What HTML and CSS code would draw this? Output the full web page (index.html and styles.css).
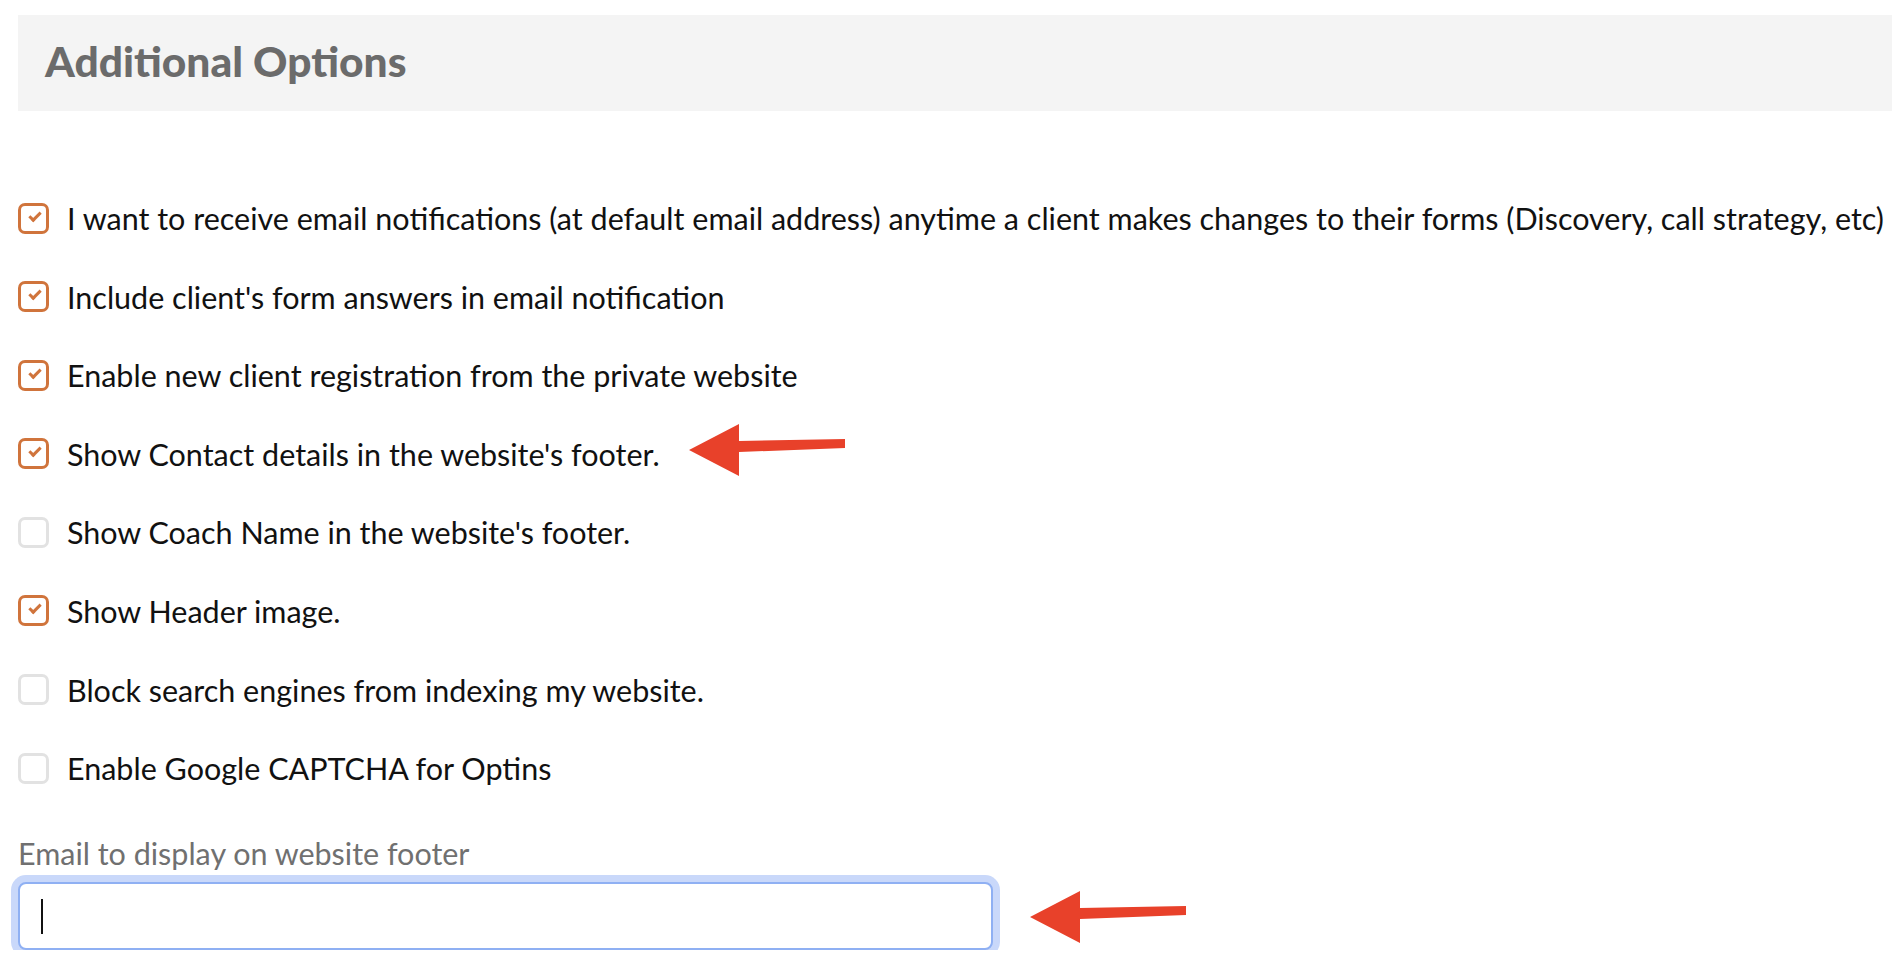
FILE: index.html
```html
<!DOCTYPE html>
<html lang="en">
<head>
  <meta charset="UTF-8">
  <meta name="viewport" content="width=device-width, initial-scale=1.0">
  <title>Additional Options</title>
  <link rel="stylesheet" href="styles.css">
</head>
<body>
  <div class="panel">
    <h2 class="panel-title">Additional Options</h2>
  </div>

  <div class="options">
    <label class="option"><span class="box checked"></span>I want to receive email notifications (at default email address) anytime a client makes changes to their forms (Discovery, call strategy, etc)</label>
    <label class="option"><span class="box checked"></span>Include client's form answers in email notification</label>
    <label class="option"><span class="box checked"></span>Enable new client registration from the private website</label>
    <label class="option"><span class="box checked"></span>Show Contact details in the website's footer.</label>
    <label class="option"><span class="box"></span>Show Coach Name in the website's footer.</label>
    <label class="option"><span class="box checked"></span>Show Header image.</label>
    <label class="option"><span class="box"></span>Block search engines from indexing my website.</label>
    <label class="option"><span class="box"></span>Enable Google CAPTCHA for Optins</label>
  </div>

  <div class="field">
    <label class="field-label" for="footer-email">Email to display on website footer</label>
    <div class="input"><span class="caret"></span></div>
  </div>

  <!-- annotation arrows -->
  <svg class="arrow arrow-one" width="160" height="52" viewBox="0 0 160 52">
    <polygon points="0,26 50,0 50,17 156,15 156,24 50,28 50,52" fill="#e8412a"/>
  </svg>
  <svg class="arrow arrow-two" width="160" height="52" viewBox="0 0 160 52">
    <polygon points="0,26 50,0 50,17 156,15 156,24 50,28 50,52" fill="#e8412a"/>
  </svg>
</body>
</html>
```

FILE: styles.css
```css
body{
  margin: 0;
  padding: 15px 0 0 18px;
  font-family: Lato, "Liberation Sans", sans-serif;
  color: #111;
  background: #fff;
}
.panel{
  background: #f4f4f4;
  height: 96px;
  display: flex;
  align-items: center;
  padding-left: 27px;
}
.panel-title{
  margin: 0 0 6px;
  font-family: Lato, sans-serif;
  font-weight: 900;
  font-size: 42.5px;
  color: #6b6b6b;
}
.options{
  display: flex;
  flex-direction: column;
  gap: 48.6px;
  margin-top: 92px;
}
.option{
  display: flex;
  align-items: center;
  height: 30px;
  font-size: 30.5px;
  white-space: nowrap;
}
.box{
  box-sizing: border-box;
  width: 31px;
  height: 31px;
  border: 3px solid #e2e2e2;
  border-radius: 7px;
  margin-right: 18px;
  flex: none;
  position: relative;
}
.box.checked{
  border-color: #d0743c;
}
.box.checked::after{
  content: "";
  position: absolute;
  left: 8px;
  top: 6px;
  width: 9px;
  height: 4px;
  border-left: 3px solid #d0743c;
  border-bottom: 3px solid #d0743c;
  transform: rotate(-45deg);
}
.field{
  margin-top: 52px;
}
.field-label{
  display: block;
  font-size: 30.5px;
  color: #707070;
  margin-bottom: 11px;
}
.input{
  box-sizing: border-box;
  width: 975px;
  height: 68px;
  border: 2px solid #8fb0f3;
  border-radius: 8px;
  box-shadow: 0 0 0 7px #c9d8fa;
  display: flex;
  align-items: center;
  padding-left: 21px;
  background: #fff;
}
.caret{
  width: 2px;
  height: 35px;
  background: #111;
}
.arrow{
  position: absolute;
}
.arrow-one{
  left: 689px;
  top: 424px;
}
.arrow-two{
  left: 1030px;
  top: 891px;
}
```
